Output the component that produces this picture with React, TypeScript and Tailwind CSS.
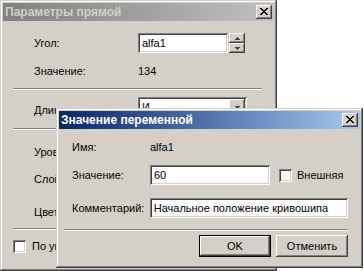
import React from 'react';

const raised = 'shadow-[inset_-1px_-1px_#404040,inset_1px_1px_#ffffff,inset_-2px_-2px_#808080,inset_2px_2px_#d4d0c8]';
const frame = 'shadow-[inset_-1px_-1px_#404040,inset_1px_1px_#d4d0c8,inset_-2px_-2px_#808080,inset_2px_2px_#ffffff]';
const sunken = 'shadow-[inset_1px_1px_#808080,inset_-1px_-1px_#ffffff,inset_2px_2px_#404040,inset_-2px_-2px_#d4d0c8]';
const defaultBtn = 'shadow-[inset_0_0_0_1px_#000000,inset_-2px_-2px_#404040,inset_2px_2px_#ffffff,inset_-3px_-3px_#808080,inset_3px_3px_#d4d0c8]';

function CloseButton() {
    return (
        <div className={`flex h-[14px] w-[16px] items-center justify-center bg-[#d4d0c8] ${raised}`}>
            <svg width="8" height="7" viewBox="0 0 8 7" shapeRendering="crispEdges" className="-mt-[1px]">
                <path
                    fill="#000"
                    d="M0 0h2v1H0z M6 0h2v1H6z M1 1h2v1H1z M5 1h2v1H5z M2 2h4v1H2z M3 3h2v1H3z M2 4h4v1H2z M1 5h2v1H1z M5 5h2v1H5z M0 6h2v1H0z M6 6h2v1H6z"
                />
            </svg>
        </div>
    );
}

function Separator() {
    return <div className="h-[2px] border-t border-t-[#808080] border-b border-b-white" />;
}

function Checkbox() {
    return <div className={`h-[13px] w-[13px] shrink-0 bg-white ${sunken}`} />;
}

function Arrow({ down }: { down?: boolean }) {
    return (
        <svg width="5" height="3" viewBox="0 0 5 3" shapeRendering="crispEdges">
            {down ? <path fill="#404040" d="M0 0h5v1H0z M1 1h3v1H1z M2 2h1v1H2z" /> : <path fill="#404040" d="M2 0h1v1H2z M1 1h3v1H1z M0 2h5v1H0z" />}
        </svg>
    );
}

export default function App() {
    return (
        <div className="relative h-[271px] w-[364px] overflow-hidden bg-white font-['Liberation_Sans',Arial,sans-serif] text-[11px] leading-none text-black">
            {/* main dialog, inactive */}
            <div className={`flex h-[271px] w-[277px] flex-col bg-[#d4d0c8] p-[3px] ${frame}`}>
                <div className="flex h-[18px] items-center justify-between bg-linear-to-r from-[#808080] to-[#c0c0c0] pl-[2px] pr-[2px]">
                    <span className="text-[12px] font-bold text-[#d4d0c8]">Параметры прямой</span>
                    <CloseButton />
                </div>
                <div className="flex flex-col pl-[10px] pr-[12px]">
                    <div className="mt-[12px] flex h-[20px] items-center pl-[21px]">
                        <span className="w-[104px]">Угол:</span>
                        <div className={`flex h-[20px] w-[90px] items-center bg-white pl-[4px] ${sunken}`}>alfa1</div>
                        <div className="ml-[1px] flex flex-col">
                            <div className={`flex h-[10px] w-[16px] items-center justify-center bg-[#d4d0c8] ${raised}`}><Arrow /></div>
                            <div className={`flex h-[10px] w-[16px] items-center justify-center bg-[#d4d0c8] ${raised}`}><Arrow down /></div>
                        </div>
                    </div>
                    <div className="mt-[8px] flex h-[20px] items-center pl-[21px]">
                        <span className="w-[104px]">Значение:</span>
                        <span>134</span>
                    </div>
                    <div className="mt-[7px]"><Separator /></div>
                    <div className="mt-[7px] flex h-[20px] items-center pl-[21px]">
                        <span className="w-[104px] pt-[6px]">Длина:</span>
                        <div className={`flex h-[20px] w-[109px] items-center justify-between bg-white pl-[4px] pr-[2px] ${sunken}`}>
                            <span>И</span>
                            <div className={`flex h-[16px] w-[16px] items-center justify-center bg-[#d4d0c8] ${raised}`}><Arrow down /></div>
                        </div>
                    </div>
                    <div className="mt-[11px]"><Separator /></div>
                    <div className="mt-[12px] flex h-[20px] items-center pl-[21px]">Уровень:</div>
                    <div className="mt-[7px] flex h-[20px] items-center pl-[21px]">Слой:</div>
                    <div className="mt-[13px] flex h-[20px] items-center pl-[21px]">Цвет:</div>
                    <div className="mt-[6px]"><Separator /></div>
                    <div className="mt-[9px] flex h-[15px] items-center gap-[6px]">
                        <Checkbox />
                        <span>По умолчанию</span>
                    </div>
                </div>
            </div>

            {/* variable value dialog, active */}
            <div className={`absolute left-[56px] top-[108px] flex h-[160px] w-[307px] flex-col bg-[#d4d0c8] p-[3px] ${frame}`}>
                <div className="flex h-[18px] items-center justify-between bg-linear-to-r from-[#0a246a] to-[#a6caf0] pl-[2px] pr-[2px]">
                    <span className="text-[12px] font-bold text-white">Значение переменной</span>
                    <CloseButton />
                </div>
                <div className="flex flex-col pl-[5px] pr-[12px]">
                    <div className="mt-[8px] flex h-[20px] items-center pl-[8px]">
                        <span className="w-[78px]">Имя:</span>
                        <span>alfa1</span>
                    </div>
                    <div className="mt-[8px] flex h-[20px] items-center pl-[8px]">
                        <span className="w-[78px]">Значение:</span>
                        <div className={`flex h-[20px] w-[120px] items-center bg-white pl-[4px] ${sunken}`}>60</div>
                        <div className="ml-[9px] flex items-center gap-[5px]">
                            <Checkbox />
                            <span>Внешняя</span>
                        </div>
                    </div>
                    <div className="mt-[13px] flex h-[20px] items-center pl-[8px]">
                        <span className="w-[78px]">Комментарий:</span>
                        <div className={`flex h-[20px] w-[199px] items-center bg-white pl-[4px] ${sunken}`}>Начальное положение кривошипа</div>
                    </div>
                    <div className="mt-[11px]"><Separator /></div>
                    <div className="mt-[4px] ml-[135px] flex gap-[5px]">
                        <button className={`flex h-[22px] w-[75px] items-center justify-center bg-[#d4d0c8] ${defaultBtn}`}>OK</button>
                        <button className={`flex h-[22px] w-[75px] items-center justify-center bg-[#d4d0c8] ${raised}`}>Отменить</button>
                    </div>
                </div>
            </div>
        </div>
    );
}
